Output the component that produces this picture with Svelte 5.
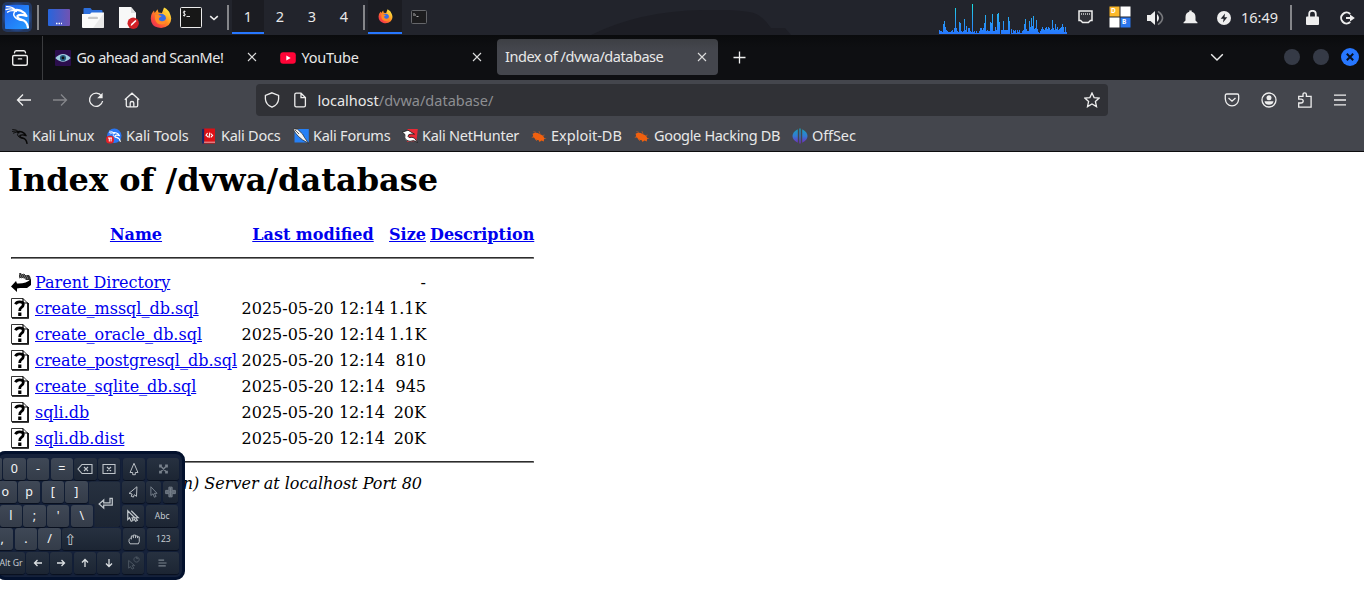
<script>
  const bars = [4,3,3,2,10,13,7,4,3,2,2,2,3,4,2,6,26,6,3,2,12,11,3,2,3,15,4,8,2,6,6,3,2,30,2,3,1,3,1,1,3,6,6,4,6,11,19,3,4,3,3,12,11,20,3,3,7,4,20,21,12,0,4,4,13,4,4,4,4,17,13,0,5,1,4,3,4,1,4,2,4,1,1,3,4,10,15,5,3,3,13,7,16,8,18,5,6,14,5,2,1,3,5,7,5,4,6,7,5,7,6,4,5,14,6,4,10,5,7,4,5,6,7,10,7,2,7,2];
  const files = [
    ['create_mssql_db.sql', '1.1K'],
    ['create_oracle_db.sql', '1.1K'],
    ['create_postgresql_db.sql', '810'],
    ['create_sqlite_db.sql', '945'],
    ['sqli.db', '20K'],
    ['sqli.db.dist', '20K']
  ];
</script>

{#snippet dragon(color)}
  <g fill="none" stroke={color} stroke-linecap="round" stroke-linejoin="round">
    <path d="M1 2.2Q7 2 10 5.6M.6 5Q6 3.6 10 5.8M2 7.6Q6 5 11 7" stroke-width="1.3" />
    <path d="M9 5.6Q14 4.4 19 8.5L21 11.5L18 10.6Q14 9.8 12 11.3Q11.4 14 16 15Q21.5 16.5 22.5 23" stroke-width="2.2" />
    <path d="M10 6.5Q7 9.5 9 12Q11 15 17 16" stroke-width="1.4" />
  </g>
{/snippet}

{#snippet firefox(id)}
  <svg viewBox="0 0 22 22" class="ff">
    <defs><linearGradient id={id} x1="1" y1="0" x2="0" y2="1"><stop offset=".1" stop-color="#fff044" /><stop offset=".48" stop-color="#ff8b20" /><stop offset=".75" stop-color="#fa4640" /><stop offset="1" stop-color="#dd2860" /></linearGradient></defs>
    <path d="M14 .5Q19 3 20 7Q23 13 18.7 18Q14 22 8 20.5Q1 19 .8 11.5Q.8 6.5 4 3.5L4.7 6L7.5 2.3L8.5 5.5L12 6Z" fill={`url(#${id})`} />
    <circle cx="11.3" cy="11.5" r="4.7" fill="#386de5" />
    <path d="M5 7.5L8.5 8L11.8 9L9.3 10.8Q8 13 10.8 14Q14 15 16 12Q17 17 12 17.5Q6 17.5 5 12Z" fill="#ff8a26" />
    <path d="M12 5.5Q17 6 18 11Q17 8 14 7.5Z" fill="#ffca30" />
  </svg>
{/snippet}

{#snippet close()}
  <svg viewBox="0 0 12 12" class="close"><path d="M2 2L10 10M10 2L2 10" /></svg>
{/snippet}

{#snippet bug()}
  <svg viewBox="0 0 16 16"><path d="M1.6 5.8Q5 3.4 8.5 6Q12.5 7 13.3 10.2L15.6 10.3L13 11.3L12.8 13.6L10.5 12.4L8.5 14L7.8 12.2Q4 12 3 9.5L.4 9.6L2.2 8.2Z" fill="#f0600f" /><path d="M5 4.4L2.5 3.6M9 6L8 3.2M12 7.5L13.5 7M4 11L6 13" fill="none" stroke="#b95a2a" stroke-width=".8" /></svg>
{/snippet}

<div class="screen">
  <div class="panel">
    <svg class="kali" viewBox="0 0 30 30">
      <defs><radialGradient id="glow"><stop offset=".55" stop-color="#2873ff" stop-opacity=".9" /><stop offset="1" stop-color="#2873ff" stop-opacity="0" /></radialGradient><linearGradient id="kb" x2="1" y2="1"><stop stop-color="#2261ef" /><stop offset="1" stop-color="#249bff" /></linearGradient></defs>
      <rect width="30" height="30" rx="5" fill="#2873ff" opacity=".25" /><rect width="30" height="30" fill="url(#glow)" /><rect x="3" y="3" width="24" height="24" rx="1" fill="url(#kb)" />
      <g transform="translate(3.5 2.5)">{@render dragon('#fff')}</g>
    </svg>
    <i class="sep"></i>
    <svg class="desk" viewBox="0 0 22 17"><defs><linearGradient id="dg" x2="1"><stop stop-color="#2765dc" /><stop offset="1" stop-color="#7153b2" /></linearGradient></defs><rect width="22" height="17" rx="1" fill="url(#dg)" /><path d="M8 14.5h1.5m1 0H12m1 0h1" stroke="#fff" stroke-width="1.3" /></svg>
    <svg class="folder" viewBox="0 0 22 20"><path d="M1.5 6V1q0-1 1-1h6l1.5 2h9.5q1 0 1 1v4z" fill="#2c6edb" /><path d="M0 6h8l1.5-1.5H22V19q0 1-1 1H1q-1 0-1-1z" fill="#fafafa" /><path d="M22 5v14q0 1-1 1H11z" fill="#dedede" opacity=".6" /><rect x="6" y="8.7" width="10" height="2.4" rx="1.2" fill="#c9c9c9" /></svg>
    <svg class="doc" viewBox="0 0 21 23"><path d="M1 1h12l5 6v15H1z" fill="#f8f8f8" /><path d="M13 1v6h5z" fill="#ddd" /><circle cx="15.2" cy="17.2" r="5.7" fill="#d22026" /><path d="M12.6 20l.5-2 4.3-4 1.1 1.1-4.1 4z" fill="#fff" /></svg>
    {@render firefox('fa')}
    <svg class="term" viewBox="0 0 22 21"><rect x=".5" y=".5" width="21" height="20" rx="1" fill="#171717" stroke="#ececec" /><path d="M5.5 4.5H3.7Q2.6 6 4.2 6.5Q6 7 5 8.5H3M4.3 3.5V9.5M6.5 9.5H10" fill="none" stroke="#eee" stroke-width=".9" /></svg>
    <svg class="chev" viewBox="0 0 10 6"><path d="M1.2 1.2L5 4.5L8.8 1.2" /></svg>
    <i class="sep s2"></i>
    <div class="workspaces"><span class="active">1</span><span>2</span><span>3</span><span>4</span></div>
    <i class="sep s3"></i>
    <div class="task active">{@render firefox('fb')}</div>
    <svg class="term2" viewBox="0 0 16 14"><rect x=".5" y=".5" width="15" height="13" rx="1" fill="#1c1c1e" stroke="#65666a" /><path d="M3 3v3M4 5h1M5.5 6.5h2" stroke="#aaa" fill="none" /></svg>
    <svg class="wall" viewBox="0 0 250 25"><path d="M0 25Q48 1 112 0Q140-1 158 2Q170 3 180 18L194 18L200 25Z" fill="#1d1e25" /></svg>
    <svg class="graph" viewBox="0 0 128 32">
      <defs><linearGradient id="gg" gradientUnits="userSpaceOnUse" x1="0" y1="0" x2="0" y2="32"><stop stop-color="#15ecdf" /><stop offset=".4" stop-color="#27b0ef" /><stop offset="1" stop-color="#2777ff" /></linearGradient></defs>
      {#each bars as h, i}<rect x={i} y={32 - h} width="1" height={h} fill="url(#gg)" />{/each}
    </svg>
    <svg class="net" viewBox="0 0 15 14"><path d="M1 1h13v9.5h-1.6l-2 2H4.6l-2-2H1z" fill="#303137" stroke="#eee" stroke-width="1.5" /><path d="M3.5 3v2m2-2v2m2-2v2m2-2v2m2-2v2" stroke="#ccc" stroke-width=".8" /></svg>
    <svg class="tiles" viewBox="0 0 22 22"><path d="M.5.5h10v10H.5z" fill="#fdb92b" /><path d="M11.5.5h10v10h-10zM.5 11.5h10v10H.5z" fill="#fff" /><path d="M11.5 11.5h10v10h-10z" fill="#2b77ee" /><text x="2" y="6.5">D</text><text x="13" y="17.8">B</text></svg>
    <svg class="vol" viewBox="0 0 18 16"><path d="M0 5h3.5L8 1v14l-4.5-4H0z" fill="#eee" /><path d="M10 4Q14 8 10 12Z" fill="#eee" /><path d="M11 1.4Q20 8 11 14.6" fill="none" stroke="#77787c" stroke-width="1.7" /></svg>
    <svg class="bell" viewBox="0 0 15 15"><path d="M6.3.5h2.4v1.2Q12.4 2.5 12.5 7v3.5l2 2v.8H.5v-.8l2-2V7Q2.6 2.5 6.3 1.7zM5.3 14h4.4z" fill="#eee" /></svg>
    <svg class="power" viewBox="0 0 14 14"><circle cx="7" cy="7" r="7" fill="#eee" /><path d="M8 2.5L3.7 7.7H6.6L6 11.5L10.3 6.2H7.5Z" fill="#202229" /></svg>
    <span class="clock">16:49</span>
    <i class="sep s4"></i>
    <svg class="lock" viewBox="0 0 13 15"><path d="M3.2 7V4q0-3.2 3.3-3.2T9.8 4v3" fill="none" stroke="#eee" stroke-width="1.8" /><rect y="6.5" width="13" height="8.5" rx="1" fill="#eee" /></svg>
    <svg class="logout" viewBox="0 0 15 14"><path d="M10.2 3A5.4 5.4 0 1 0 10.2 11M6 7h5" fill="none" stroke="#eee" stroke-width="2" /><path d="M10 3.6L14.8 7L10 10.4z" fill="#eee" /></svg>
  </div>

  <div class="tabs">
    <svg class="view" viewBox="0 0 18 18"><path d="M3.5 3.8Q3.7 1.8 5.2 1.8H12.8Q14.3 1.8 14.5 3.8M1.7 7.8q0-1.3 1.3-1.3h12q1.3 0 1.3 1.3v6.7q0 1.8-1.8 1.8H3.5q-1.8 0-1.8-1.8zM7.4 9.9h3.2" fill="none" stroke="#eee" stroke-width="1.4" stroke-linecap="round" /></svg>
    <i class="tabline"></i>
    <div class="tab one">
      <svg viewBox="0 0 16 16"><rect width="16" height="16" rx="1" fill="#2b0e4d" /><path d="M.3 8Q8 0 15.7 8Q8 15.5.3 8" fill="#a0cde0" /><circle cx="8" cy="8" r="3.1" fill="#245f80" /><circle cx="8" cy="8" r="1.4" fill="#111" /></svg>
      <span class="t1">Go ahead and ScanMe!</span>{@render close()}
    </div>
    <div class="tab two">
      <svg viewBox="0 0 16 16"><rect x=".2" y="2.2" width="15.6" height="11.6" rx="3" fill="#ff0437" /><path d="M6.3 5.5v5L10.7 8z" fill="#fff" /></svg>
      <span class="t2">YouTube</span>{@render close()}
    </div>
    <div class="tab three"><span class="t3">Index of /dvwa/database</span>{@render close()}</div>
    <svg class="plus" viewBox="0 0 13 13"><path d="M.5 6.5h12M6.5.5v12" /></svg>
    <svg class="down" viewBox="0 0 14 9"><path d="M1.2 1.2L7 7L12.8 1.2" /></svg>
    <i class="dot"></i><i class="dot d2"></i>
    <svg class="winclose" viewBox="0 0 18 18"><circle cx="9" cy="9" r="9" fill="#2777ff" /><path d="M5.8 5.8l6.4 6.4m0-6.4l-6.4 6.4" stroke="#07101f" stroke-width="2" /></svg>
  </div>

  <div class="chrome">
    <div class="nav">
      <svg class="ic back" viewBox="0 0 16 16"><path d="M15 8H1.5M7 2.5L1.5 8L7 13.5" /></svg>
      <svg class="ic fwd" viewBox="0 0 16 16"><path d="M1 8h13.5M9 2.5L14.5 8L9 13.5" /></svg>
      <svg class="ic reload" viewBox="0 0 16 16"><path d="M13.5 4A6.6 6.6 0 1 0 14.6 9" /><path d="M14.6.8V6.2H9.2z" fill="#eee" stroke="none" /></svg>
      <svg class="ic home" viewBox="0 0 16 16"><path d="M.8 7.8L8 1.2L15.2 7.8M2.3 7v6.5q0 1.3 1.3 1.3h8.8q1.3 0 1.3-1.3V7M6.2 14.5V11q0-1.5 1.8-1.5T9.8 11v3.5" /></svg>
      <div class="url">
        <svg class="ic" viewBox="0 0 16 16"><path d="M8 .8L14.6 3.5V7Q14.2 12.7 8 15.2Q1.8 12.7 1.4 7V3.5Z" /></svg>
        <svg class="ic page" viewBox="0 0 16 16"><path d="M2.8 2.6q0-1.4 1.4-1.4H9L13.4 5.6v7.8q0 1.4-1.4 1.4H4.2q-1.4 0-1.4-1.4zM9 1.2V5.6h4.4" /></svg>
        <span class="addr">localhost<b>/dvwa/database/</b></span>
        <svg class="ic star" viewBox="0 0 16 16"><path d="M8 1L10.1 5.6L15.1 6.1L11.4 9.5L12.5 14.6L8 12L3.5 14.6L4.6 9.5L.9 6.1L5.9 5.6Z" /></svg>
      </div>
      <svg class="ic pocket" viewBox="0 0 16 16"><path d="M2.7 2h10.6q1.4 0 1.4 1.4V7Q14 13.7 8 13.8Q2 13.7 1.3 7V3.4Q1.3 2 2.7 2M4.5 6L8 9.2L11.5 6" /></svg>
      <svg class="ic user" viewBox="0 0 16 16"><circle cx="8" cy="8" r="7" /><circle cx="8" cy="5.8" r="2.5" fill="#eee" stroke="none" /><path d="M3.5 9.3h9Q12 12.8 8 12.8T3.5 9.3" fill="#eee" stroke="none" /></svg>
      <svg class="ic ext" viewBox="0 0 16 16"><path d="M1.7 15.2V11H4Q6.2 11 6.2 9.1T4 7.2H1.7V4.3H6V2.5Q6 .8 7.7.8T9.4 2.5V4.3h4.7v10.9z" /></svg>
      <svg class="ic menu" viewBox="0 0 16 16"><path d="M2 3.2h12M2 8h12M2 12.8h12" /></svg>
    </div>
    <div class="bookmarks">
      <div><svg viewBox="0 0 24 24">{@render dragon('#080808')}</svg><span>Kali Linux</span></div>
      <div><svg viewBox="0 0 16 16"><circle cx="8.3" cy="7.8" r="7.2" fill="#2977f5" /><g transform="translate(3 2) scale(.5)">{@render dragon('#fff')}</g><rect y="7.8" width="8" height="7.8" rx="3.5" fill="#e32027" /><path d="M2 10h4M3.3 10v3.5m1.8-3.5v3.5" stroke="#fff" /></svg><span>Kali Tools</span></div>
      <div><svg viewBox="0 0 16 16"><path d="M2.2.5H14v15H2.2z" fill="#db1117" /><path d="M1 1.3L3.2.5v15H1z" fill="#172767" /><path d="M3 14.2h11" stroke="#eee" stroke-width=".7" /><path d="M6.6 5L5 7.2L7.2 9M9.8 5.6L11.6 7.4L9.8 9.4M8.8 4.6L8 9.8" fill="none" stroke="#fff" stroke-width="1.1" /></svg><span>Kali Docs</span></div>
      <div><svg viewBox="0 0 16 16"><path d="M1.5 1H15.8V14.5H1.5z" fill="#2680f5" /><path d="M0 .8L4.5 1.2L9.5 6L11.5 9.5L15.5 15.3L9.5 11.8L5.5 8.5L2.5 5Z" fill="#f4f4f4" stroke="#222" stroke-width=".7" /><path d="M2 2L6 6" stroke="#333" stroke-width=".8" /></svg><span>Kali Forums</span></div>
      <div><svg viewBox="0 0 16 16"><path d="M5.5 1H15.8L14.5 13L5 14z" fill="#e82a36" /><path d="M.3 4.2L6 2.2L12.5 6.2L9.5 6Q6 6 6 8.3Q6.3 10.3 10 9.3L12.5 10.2L15.6 14.5L11.5 12.5Q8 14.2 5 12.5Q1.5 10.5 3 6.5Z" fill="#fff" stroke="#171717" stroke-width=".8" /></svg><span>Kali NetHunter</span></div>
      <div>{@render bug()}<span>Exploit-DB</span></div>
      <div>{@render bug()}<span>Google Hacking DB</span></div>
      <div><svg viewBox="0 0 16 16"><defs><linearGradient id="os" x2="0" y2="1"><stop stop-color="#17a1ba" /><stop offset=".5" stop-color="#337bd3" /><stop offset="1" stop-color="#7527bb" /></linearGradient></defs><path d="M5.8 1.2v13.6Q.5 12 .5 8T5.8 1.2M10.2 1.2v13.6Q15.5 12 15.5 8T10.2 1.2M7.3.5h1.4v15H7.3z" fill="url(#os)" /></svg><span>OffSec</span></div>
    </div>
  </div>

  <main>
    <h1>Index of /dvwa/database</h1>
    <table>
      <tbody>
        <tr><th class="ico"><i></i></th><th class="name"><u>Name</u></th><th class="date"><u>Last modified</u></th><th class="size"><u>Size</u></th><th class="desc"><u>Description</u></th></tr>
        <tr><th colspan="5"><hr /></th></tr>
        <tr><td><svg viewBox="0 0 20 22"><path d="M8 2h2v1h4v1h4q2 2 2 5h-5l-2-2H8z" fill="#333" /><path d="M8 3h6M9 5h8M8 7h9" stroke="#999" stroke-dasharray="1 1" /><path d="M20 8v6l-4 3H9l-3 .5V21L0 15.5L5 10l1 2.5Q15 13 20 8" /></svg></td><td><u>Parent Directory</u></td><td></td><td class="num">-</td><td></td></tr>
        {#each files as [name, size]}
          <tr><td><svg viewBox="0 0 20 22"><path d="M.5 1.5H12L16.5 6V20.5H.5Z" fill="#fff" stroke="#333" /><path d="M1 21.2H17.3V6M12 1.5V6H17" fill="none" stroke="#000" stroke-width="1.2" /><path d="M4.5 7.2Q5.5 4.8 8.5 4.8Q12.3 4.8 12.3 7.6Q12.3 9.3 10.2 10.7Q8.7 11.7 8.7 14" fill="none" stroke="#000" stroke-width="2.8" /><path d="M7.2 15.5h3.2V19H7.2z" /></svg></td><td><u>{name}</u></td><td class="num">2025-05-20 12:14</td><td class="num">{size}</td><td></td></tr>
        {/each}
        <tr><th colspan="5"><hr /></th></tr>
      </tbody>
    </table>
    <address>n) Server at localhost Port 80</address>
  </main>

  <div class="keyboard">
    <div class="row r1"><b class="stub"></b><b>0</b><b>-</b><b>=</b>
      <b class="dk"><svg viewBox="0 0 16 12"><path d="M5 1.5h10v9H5L1 6zM7 4l4 4m0-4L7 8" /></svg></b>
      <b class="dk"><svg viewBox="0 0 16 12"><path d="M2 1.5h12v9H2zM6 4l4 4m0-4L6 8" /></svg></b>
      <b class="dk side"><svg viewBox="0 0 14 16"><path d="M7 1.5L11.5 12H8.5v2.5h-3V12h-3z" /></svg></b>
      <b class="dk wide"><svg viewBox="0 0 16 16" class="dim"><path d="M3.5 3.5l9 9m0-9l-9 9M6 3.5H3.5V6M10 3.5h2.5V6m0 4v2.5H10m-4 0H3.5V10" stroke-width="1.8" /></svg></b></div>
    <div class="row r2"><b>o</b><b>p</b><b>[</b><b>]</b>
      <b class="dk enter"><svg viewBox="0 0 14 12"><path d="M10.5 1h2v6H5v2.5L1 6l4-3.5V5h5.5z" /></svg></b>
      <b class="dk side"><svg viewBox="0 0 14 16"><path d="M11.5 2L2.5 9.5L6 10.3L5 13l2.5.8l1-2.7L11 13z" /></svg></b>
      <b class="dk half"><svg viewBox="0 0 14 16" class="dim"><path d="M4 2v10l2.5-2L8 14l2-1l-2-3.5h3z" /></svg></b>
      <b class="dk half"><svg viewBox="0 0 16 16" class="dim"><path d="M6 2h4v4h4v4h-4v4H6v-4H2V6h4z" fill="#59626e" /><path d="M8 3v10M3 8h10" /></svg></b></div>
    <div class="row r3"><b>l</b><b>;</b><b>'</b><b>\</b><i></i>
      <b class="dk side"><svg viewBox="0 0 16 16"><path d="M2 2v10l2-2l2 4l2-1l-1-3h3zM6 2l8 8h-3l2 3-2 1-2-3" stroke-width="1.4" /></svg></b>
      <b class="dk wide">Abc</b></div>
    <div class="row r4"><b>,</b><b>.</b><b>/</b><b class="dk shift">⇧</b>
      <b class="dk side"><svg viewBox="0 0 16 16"><path d="M3.5 13.5Q1.5 11 2.5 8.5L5 6V4.5h2.3V3.5h2.4V4.5H12V5.5h2V11l-1 2.5zM5 6v2.5M7.3 4.5V7M9.7 4.5V7M12 5.5V7" /></svg></b>
      <b class="dk wide">123</b></div>
    <div class="row r5"><b class="dk alt">Alt Gr</b>
      <b class="dk"><svg viewBox="0 0 16 14" class="arrow"><path d="M12 7H4.5M7.5 4L4.5 7l3 3" /></svg></b>
      <b class="dk"><svg viewBox="0 0 16 14" class="arrow"><path d="M4 7h7.5M8.5 4l3 3l-3 3" /></svg></b>
      <b class="dk"><svg viewBox="0 0 16 14" class="arrow"><path d="M8 11V3.5M5 6.5l3-3l3 3" /></svg></b>
      <b class="dk"><svg viewBox="0 0 16 14" class="arrow"><path d="M8 3v7.5M5 7.5l3 3l3-3" /></svg></b>
      <b class="dk side"><svg viewBox="0 0 16 16" class="dark"><path d="M3 5v9l2-2 2 3 2-1-2-3h3zM12 1a3 3 0 1 0 .1 0v2h2" /></svg></b>
      <b class="dk wide"><svg viewBox="0 0 16 16" class="dim"><path d="M3 4.5h7M3 8h10M3 11.5h9" stroke-width="1.5" /></svg></b></div>
  </div>
</div>

<style>
  :global(body) { margin: 0; background: #fff; overflow: hidden; }
  .screen { width: 1364px; height: 608px; position: relative; overflow: hidden; font-family: 'Noto Sans', sans-serif; color: #e8e8e8; }
  svg { display: block; flex: none; box-sizing: border-box; }
  .panel, .tabs, .nav, .bookmarks, .tab, .url, .bookmarks div, .row { display: flex; align-items: center; }
  .panel { height: 35px; background: #22242c; box-sizing: border-box; }
  .kali { width: 30px; height: 30px; margin: 0 0 1px 2px; }
  .sep { width: 2px; height: 25px; background: #85868a; margin-left: 5px; flex: none; }
  .desk { width: 22px; height: 17px; margin-left: 9px; }
  .folder { width: 22px; height: 20px; margin-left: 12px; }
  .doc { width: 21px; height: 23px; margin-left: 14px; }
  .ff { width: 22px; height: 22px; margin-left: 11px; }
  .term { width: 22px; height: 21px; margin-left: 8px; }
  .chev { width: 10px; height: 6px; margin-left: 7px; fill: none; stroke: #eee; stroke-width: 1.6; }
  .s2 { margin-left: 8px; }
  .workspaces { display: flex; height: 34px; align-self: start; margin-left: 3px; font-size: 14.5px; }
  .workspaces span { width: 32px; box-sizing: border-box; text-align: center; line-height: 33px; border-bottom: 2px solid transparent; }
  .workspaces span.active, .task.active { background: #1b1c22; border-bottom: 2px solid #2777ff; }
  .s3 { margin-left: 3px; }
  .task { width: 34px; height: 34px; align-self: start; box-sizing: border-box; margin-left: 3px; display: flex; align-items: center; justify-content: center; padding-top: 1px; }
  .task .ff { width: 15px; height: 15px; margin: 0; }
  .term2 { width: 16px; height: 14px; margin: 0 0 1px 9px; }
  .wall { width: 250px; height: 25px; align-self: end; margin-left: 156px; }
  .graph { width: 128px; height: 32px; margin-left: 98px; align-self: end; margin-bottom: 1px; }
  .wall { margin-left: 164px; }
  .net { width: 15px; height: 14px; margin: 0 0 2px 11px; }
  .tiles { width: 22px; height: 22px; margin-left: 16px; margin-bottom: 1px; }
  .tiles text { font: bold 6.5px 'Noto Sans', sans-serif; fill: #fff; }
  .vol { width: 18px; height: 16px; margin-left: 16px; }
  .bell { width: 15px; height: 15px; margin: 0 0 1px 18px; }
  .power { width: 14px; height: 14px; margin-left: 19px; }
  .clock { width: 38px; margin-left: 10px; font-size: 14.5px; white-space: nowrap; margin-bottom: 2px; }
  .s4 { margin-left: 11px; }
  .lock { width: 13px; height: 15px; margin-left: 14px; }
  .logout { width: 15px; height: 14px; margin-left: 21px; }

  .tabs { height: 45px; background: linear-gradient(#0a0b0d, #0e0f12 12px); font-size: 14.5px; }
  .view { width: 18px; height: 18px; margin-left: 11px; }
  .tabline { width: 1px; height: 44px; background: #3b3c3f; margin-left: 13px; }
  .tab { height: 36px; box-sizing: border-box; white-space: nowrap; }
  .tab > svg:first-child { width: 16px; height: 16px; }
  .tab span { padding-bottom: 2px; }
  .close { width: 12px; height: 12px; margin-left: auto; margin-bottom: 1px; stroke: #ddd; stroke-width: 1.1; }
  .one { width: 203px; margin-left: 12px; }
  .one span, .two span { margin-left: 5.5px; }
  .t1 { letter-spacing: -.47px; }
  .t2 { letter-spacing: -.2px; }
  .t3 { letter-spacing: -.46px; }
  .two { width: 203px; margin-left: 22px; }
  .three { width: 221px; margin-left: 14px; padding: 0 10px 0 8px; border-radius: 4px; background: linear-gradient(#3d3f44, #44464d 10px); height: 36px; margin-bottom: 1px; }
  .plus { width: 13px; height: 13px; margin-left: 15px; stroke: #eee; stroke-width: 1.3; }
  .down { width: 14px; height: 9px; margin-left: 464px; fill: none; stroke: #eee; stroke-width: 1.4; }
  .dot { width: 16px; height: 16px; border-radius: 50%; background: #353a46; margin: 0 0 1px 60px; }
  .dot.d2 { margin-left: 13px; }
  .winclose { width: 18px; height: 18px; margin: 0 0 1px 12px; }

  .chrome { height: 72px; background: #44464d; border-bottom: 1px solid #0c0c0e; box-sizing: border-box; }
  .nav { height: 40px; }
  .ic { width: 16px; height: 16px; fill: none; stroke: #eee; stroke-width: 1.3; }
  .back { margin-left: 16px; }
  .fwd { margin-left: 20px; stroke: #85868b; }
  .reload { margin-left: 20px; }
  .home { margin-left: 19.5px; }
  .url { width: 852px; height: 32px; box-sizing: border-box; margin-left: 116.5px; padding: 0 8px; border-radius: 4px; background: #303136; font-size: 14.5px; }
  .page { margin-left: 12px; }
  .addr { margin-left: 9.5px; }
  .addr b { font-weight: 400; color: #8d8e92; }
  .star { margin-left: auto; }
  .pocket { margin-left: 116px; }
  .user { margin-left: 20.5px; }
  .ext { margin-left: 20px; }
  .menu { margin-left: 19.5px; }
  .bookmarks { height: 31px; font-size: 14.5px; padding-left: 12px; }
  .bookmarks div { white-space: nowrap; }
  .bookmarks span { padding-bottom: 2px; }
  .bookmarks div:nth-child(1) { width: 94px; letter-spacing: -.32px; }
  .bookmarks div:nth-child(2) { width: 95px; letter-spacing: -.1px; }
  .bookmarks div:nth-child(3) { width: 92px; letter-spacing: -.25px; }
  .bookmarks div:nth-child(4) { width: 109px; letter-spacing: -.25px; }
  .bookmarks div:nth-child(5) { width: 129px; letter-spacing: -.27px; }
  .bookmarks div:nth-child(6) { width: 103px; }
  .bookmarks div:nth-child(7) { width: 158px; letter-spacing: -.33px; }
  .bookmarks div:nth-child(8) { letter-spacing: -.1px; }
  .bookmarks svg { width: 16px; height: 16px; margin-right: 4px; }

  main { font: 16px/19px 'DejaVu Serif', serif; color: #000; padding: 9px 8px 8px; }
  h1 { font-size: 32px; line-height: 38px; margin: 0 0 21px; white-space: nowrap; }
  table { table-layout: fixed; width: 529px; border-spacing: 2px; border-collapse: separate; }
  td, th { padding: 1px; height: 22px; white-space: nowrap; }
  th[colspan] { height: 18px; }
  th i { display: block; height: 22px; }
  .ico { width: 20px; }
  .name { width: 202px; }
  .date { width: 144px; }
  .size { width: 37px; }
  .num { text-align: right; }
  td svg { width: 20px; height: 22px; }
  u { color: #0000ee; }
  hr { margin: 8px 0; border: 1px inset #808080; }
  address { font-style: italic; white-space: nowrap; width: 414px; text-align: right; }

  .keyboard { position: absolute; left: -4px; top: 451px; width: 189px; height: 129px; box-sizing: border-box; border: 3px solid #03112d; border-radius: 9px; background: #15213a; padding-top: 4px; display: flex; flex-direction: column; gap: 1.4px; overflow: hidden; }
  .row { height: 22px; gap: 1.4px; align-items: start; flex: none; }
  .row b { width: 22.3px; height: 22px; flex: none; box-sizing: border-box; border-radius: 3px; background: linear-gradient(#3f4856, #343c49); box-shadow: 0 1px 1px #080f1d; font-weight: 400; font-size: 12.5px; line-height: 22px; text-align: center; color: #f3f5f6; display: flex; justify-content: center; align-items: center; }
  .row b.dk { background: linear-gradient(#273140, #1c2533); color: #c5cbd1; }
  .row svg { width: 16px; height: 14px; fill: none; stroke: #bfc5ca; stroke-width: 1.1; }
  .row svg.arrow { stroke: #dde1e4; stroke-width: 1.3; }
  .row svg.dim { stroke: #78818c; width: 13px; }
  .row svg.dark { stroke: #4d5763; }
  .row b.stub { width: 3px; }
  .r1 { margin-left: -.2px; }
  .r2 { margin-left: -4.8px; }
  .r3 { margin-left: .7px; }
  .r4 { margin-left: -8px; }
  .r5 { margin-left: -2px; }
  .row b.side { width: 22.3px; margin-left: .9px; }
  .row b.wide { width: 32px; margin-left: .8px; font-size: 8.5px; }
  .row b.half { width: 15px; margin-left: .5px; }
  .row b.enter { width: 31px; height: 45.5px; clip-path: polygon(0 0, 100% 0, 100% 100%, 18% 100%, 18% 50%, 0 50%); padding-left: 4px; }
  .r3 i { width: 25px; flex: none; }
  .row b.shift { width: 58.5px; justify-content: start; padding-left: 2px; font-size: 15px; }
  .row b.alt { width: 28px; font-size: 8.7px; white-space: nowrap; }
</style>
